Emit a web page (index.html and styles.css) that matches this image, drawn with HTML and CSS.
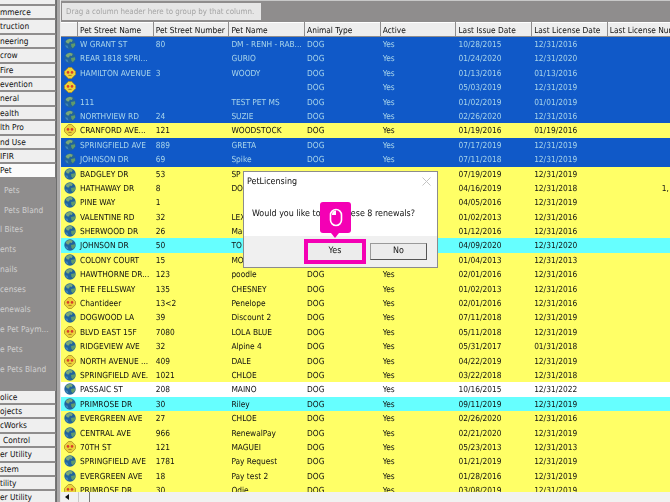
FILE: index.html
```html
<!DOCTYPE html>
<html lang="en">
<head>
    <meta charset="UTF-8">
    <meta name="viewport" content="width=device-width, initial-scale=1.0">
    <title>Pet Licensing</title>
    <link rel="stylesheet" href="styles.css">
</head>
<body>
    <svg class="defs" width="0" height="0">
        <symbol id="globe" viewBox="0 0 12 12">
            <circle cx="6" cy="6" r="5.7" fill="#20639c"/>
            <path d="M3 1.8 6 .8 8.8 1.8 7.8 4 5.8 3.6 5 5.6 3 5.2 1.6 3.6Z" fill="#79a878"/>
            <path d="M7 6 11 5.2 11.2 7.4 8.8 10.2 7.4 8.6Z" fill="#5f9a6c"/>
            <path d="M1 7.4 3.4 7.6 4.6 10.6 2.6 9.8Z" fill="#3f86bb"/>
        </symbol>
        <symbol id="smiley" viewBox="0 0 12 12">
            <path d="M4.4.5H7.6L11.5 4.4V7.6L7.6 11.5H4.4L.5 7.6V4.4Z" fill="#ecd23a" stroke="#a98c24" stroke-width=".8"/>
            <circle cx="4" cy="5.4" r="1.3" fill="#d8402c"/>
            <circle cx="8" cy="5.4" r="1.3" fill="#d8402c"/>
            <path d="M4.4 8.4H7.6" stroke="#a06a20" stroke-width=".8"/>
        </symbol>
    </svg>

    <div class="app">
        <div class="sidebar">
            <div class="nav-top">
                <div class="nav-btn"></div>
                <div class="nav-btn">mmerce</div>
                <div class="nav-btn">truction</div>
                <div class="nav-btn">neering</div>
                <div class="nav-btn">crow</div>
                <div class="nav-btn">Fire</div>
                <div class="nav-btn">evention</div>
                <div class="nav-btn">neral</div>
                <div class="nav-btn">ealth</div>
                <div class="nav-btn">lth Pro</div>
                <div class="nav-btn">nd Use</div>
                <div class="nav-btn">IFIR</div>
                <div class="nav-btn current">Pet</div>
            </div>
            <div class="nav-panel">
                <div class="nav-link inset">Pets</div>
                <div class="nav-link inset">Pets Bland</div>
                <div class="nav-link">l Bites</div>
                <div class="nav-link">ents</div>
                <div class="nav-link">nails</div>
                <div class="nav-link">censes</div>
                <div class="nav-link">enewals</div>
                <div class="nav-link">e Pet Paym...</div>
                <div class="nav-link">e Pets</div>
                <div class="nav-link">e Pets Bland</div>
            </div>
            <div class="nav-bottom">
                <div class="nav-btn">olice</div>
                <div class="nav-btn">ojects</div>
                <div class="nav-btn">cWorks</div>
                <div class="nav-btn inset">Control</div>
                <div class="nav-btn">er Utility</div>
                <div class="nav-btn">stem</div>
                <div class="nav-btn">tility</div>
                <div class="nav-btn">er Utility</div>
            </div>
        </div>
        <div class="splitter"></div>
        <div class="main">
            <div class="group-bar">
                <div class="group-hint">Drag a column header here to group by that column.</div>
            </div>
            <div class="row head">
                <span></span>
                <span>Pet Street Name</span>
                <span>Pet Street Number</span>
                <span>Pet Name</span>
                <span>Animal Type</span>
                <span>Active</span>
                <span>Last Issue Date</span>
                <span>Last License Date</span>
                <span>Last License Number</span>
            </div>
            <div class="rows">
                <div class="row blue"><svg><use href="#globe"/></svg><span>W GRANT ST</span><span>80</span><span>DM - RENH - RAB...</span><span>DOG</span><span>Yes</span><span>10/28/2015</span><span>12/31/2016</span><span></span></div>
                <div class="row blue"><svg><use href="#globe"/></svg><span>REAR 1818 SPRI...</span><span></span><span>GURIO</span><span>DOG</span><span>Yes</span><span>01/24/2020</span><span>12/31/2020</span><span></span></div>
                <div class="row blue"><svg><use href="#smiley"/></svg><span>HAMILTON AVENUE</span><span>3</span><span>WOODY</span><span>DOG</span><span>Yes</span><span>01/13/2016</span><span>01/13/2016</span><span></span></div>
                <div class="row blue"><svg><use href="#smiley"/></svg><span></span><span></span><span></span><span>DOG</span><span>Yes</span><span>05/03/2019</span><span>12/31/2019</span><span></span></div>
                <div class="row blue"><svg><use href="#globe"/></svg><span>111</span><span></span><span>TEST PET MS</span><span>DOG</span><span>Yes</span><span>01/02/2019</span><span>01/01/2019</span><span></span></div>
                <div class="row blue"><svg><use href="#globe"/></svg><span>NORTHVIEW RD</span><span>24</span><span>SUZIE</span><span>DOG</span><span>Yes</span><span>02/26/2020</span><span>12/31/2016</span><span></span></div>
                <div class="row yellow"><svg><use href="#smiley"/></svg><span>CRANFORD AVE...</span><span>121</span><span>WOODSTOCK</span><span>DOG</span><span>Yes</span><span>01/19/2016</span><span>01/19/2016</span><span></span></div>
                <div class="row blue"><svg><use href="#globe"/></svg><span>SPRINGFIELD AVE</span><span>889</span><span>GRETA</span><span>DOG</span><span>Yes</span><span>07/17/2019</span><span>12/31/2019</span><span></span></div>
                <div class="row blue"><svg><use href="#globe"/></svg><span>JOHNSON DR</span><span>69</span><span>Spike</span><span>DOG</span><span>Yes</span><span>07/11/2018</span><span>12/31/2019</span><span></span></div>
                <div class="row yellow"><svg><use href="#globe"/></svg><span>BADGLEY DR</span><span>53</span><span>SP</span><span></span><span></span><span>07/19/2019</span><span>12/31/2019</span><span></span></div>
                <div class="row yellow"><svg><use href="#globe"/></svg><span>HATHAWAY DR</span><span>8</span><span>DO</span><span></span><span></span><span>04/16/2019</span><span>12/31/2018</span><span class="num">1,</span></div>
                <div class="row yellow"><svg><use href="#globe"/></svg><span>PINE WAY</span><span>1</span><span></span><span></span><span></span><span>04/05/2016</span><span>12/31/2019</span><span></span></div>
                <div class="row yellow"><svg><use href="#globe"/></svg><span>VALENTINE RD</span><span>32</span><span>LEX</span><span></span><span></span><span>01/02/2013</span><span>12/31/2016</span><span></span></div>
                <div class="row yellow"><svg><use href="#globe"/></svg><span>SHERWOOD DR</span><span>26</span><span>Mac</span><span></span><span></span><span>01/12/2016</span><span>12/31/2016</span><span></span></div>
                <div class="row cyan"><svg><use href="#globe"/></svg><span>JOHNSON DR</span><span>50</span><span>TO</span><span></span><span></span><span>04/09/2020</span><span>12/31/2020</span><span></span></div>
                <div class="row yellow"><svg><use href="#globe"/></svg><span>COLONY COURT</span><span>15</span><span>MO</span><span></span><span></span><span>01/04/2013</span><span>12/31/2013</span><span></span></div>
                <div class="row yellow"><svg><use href="#globe"/></svg><span>HAWTHORNE DR...</span><span>123</span><span>poodle</span><span>DOG</span><span>Yes</span><span>02/01/2016</span><span>12/31/2016</span><span></span></div>
                <div class="row yellow"><svg><use href="#globe"/></svg><span>THE FELLSWAY</span><span>135</span><span>CHESNEY</span><span>DOG</span><span>Yes</span><span>01/02/2013</span><span>12/31/2016</span><span></span></div>
                <div class="row yellow"><svg><use href="#smiley"/></svg><span>Chantideer</span><span>13&lt;2</span><span>Penelope</span><span>DOG</span><span>Yes</span><span>02/01/2016</span><span>12/31/2016</span><span></span></div>
                <div class="row yellow"><svg><use href="#globe"/></svg><span>DOGWOOD LA</span><span>39</span><span>Discount 2</span><span>DOG</span><span>Yes</span><span>07/11/2018</span><span>12/31/2019</span><span></span></div>
                <div class="row yellow"><svg><use href="#smiley"/></svg><span>BLVD EAST 15F</span><span>7080</span><span>LOLA BLUE</span><span>DOG</span><span>Yes</span><span>05/11/2018</span><span>12/31/2019</span><span></span></div>
                <div class="row yellow"><svg><use href="#globe"/></svg><span>RIDGEVIEW AVE</span><span>32</span><span>Alpine 4</span><span>DOG</span><span>Yes</span><span>05/31/2017</span><span>01/31/2018</span><span></span></div>
                <div class="row yellow"><svg><use href="#smiley"/></svg><span>NORTH AVENUE ...</span><span>409</span><span>DALE</span><span>DOG</span><span>Yes</span><span>04/22/2019</span><span>12/31/2019</span><span></span></div>
                <div class="row yellow"><svg><use href="#globe"/></svg><span>SPRINGFIELD AVE.</span><span>1021</span><span>CHLOE</span><span>DOG</span><span>Yes</span><span>03/22/2018</span><span>12/31/2018</span><span></span></div>
                <div class="row white"><svg><use href="#globe"/></svg><span>PASSAIC ST</span><span>208</span><span>MAINO</span><span>DOG</span><span>Yes</span><span>10/16/2015</span><span>12/31/2022</span><span></span></div>
                <div class="row cyan"><svg><use href="#globe"/></svg><span>PRIMROSE DR</span><span>30</span><span>Riley</span><span>DOG</span><span>Yes</span><span>09/11/2019</span><span>12/31/2019</span><span></span></div>
                <div class="row yellow"><svg><use href="#globe"/></svg><span>EVERGREEN AVE</span><span>27</span><span>CHLOE</span><span>DOG</span><span>Yes</span><span>02/26/2020</span><span>12/31/2016</span><span></span></div>
                <div class="row yellow"><svg><use href="#globe"/></svg><span>CENTRAL AVE</span><span>966</span><span>RenewalPay</span><span>DOG</span><span>Yes</span><span>02/21/2020</span><span>12/31/2019</span><span></span></div>
                <div class="row yellow"><svg><use href="#smiley"/></svg><span>70TH ST</span><span>121</span><span>MAGUEI</span><span>DOG</span><span>Yes</span><span>05/23/2013</span><span>12/31/2013</span><span></span></div>
                <div class="row yellow"><svg><use href="#globe"/></svg><span>SPRINGFIELD AVE</span><span>1781</span><span>Pay Request</span><span>DOG</span><span>Yes</span><span>01/21/2019</span><span>12/31/2019</span><span></span></div>
                <div class="row yellow"><svg><use href="#globe"/></svg><span>EVERGREEN AVE</span><span>18</span><span>Pay test 2</span><span>DOG</span><span>Yes</span><span>01/28/2016</span><span>12/31/2019</span><span></span></div>
                <div class="row yellow"><svg><use href="#smiley"/></svg><span>PRIMROSE DR</span><span>30</span><span>Odie</span><span>DOG</span><span>Yes</span><span>03/08/2019</span><span>12/31/2019</span><span></span></div>
            </div>
            <div class="hscroll">
                <div class="hscroll-arrow"></div>
                <div class="hscroll-thumb"></div>
            </div>
        </div>
    </div>

    <div class="dialog">
        <div class="dialog-title">
            <span>PetLicensing</span>
            <svg class="dialog-close" width="9" height="9" viewBox="0 0 9 9"><path d="M.5.5 8.5 8.5M8.5.5.5 8.5" stroke="#c4c4c4" stroke-width="1"/></svg>
        </div>
        <div class="dialog-msg"><span>Would you like to</span><span>these 8 renewals?</span></div>
        <div class="dialog-foot">
            <div class="dialog-btn yes">Yes</div>
            <div class="dialog-btn no">No</div>
        </div>
    </div>

    <div class="callout">
        <svg width="14" height="19" viewBox="0 0 14 19">
            <rect x="1.5" y="1.5" width="11" height="16" rx="5.5" fill="none" stroke="#fff" stroke-width="1.6"/>
            <path d="M3 7V6.5A4 4 0 0 1 7 2.5V7Z" fill="#fff"/>
        </svg>
    </div>
</body>
</html>
```

FILE: styles.css
```css
html, body {
    margin: 0;
    height: 502px;
    overflow: hidden;
}
body {
    font-family: "DejaVu Sans", sans-serif;
    font-stretch: condensed;
    font-size: 8.3px;
    text-rendering: geometricPrecision;
    color: #111;
    background: #8f8d8d;
}
.defs {
    position: absolute;
}
.app {
    display: flex;
    height: 502px;
    filter: blur(0.3px);
}

/* left navigation, cut off by the edge of the picture */
.sidebar {
    width: 56px;
    flex: none;
    display: flex;
    flex-direction: column;
    overflow: hidden;
    background: #8f8d8d;
}
.nav-top {
    margin-top: -8.4px;
}
.nav-btn {
    height: 14.4px;
    line-height: 13px;
    box-sizing: border-box;
    background: #efefef;
    border-bottom: 2px solid #8f8d8d;
    border-right: 1px solid #777;
    white-space: nowrap;
}
.nav-btn.current {
    background: #fbfbfb;
}
.nav-panel {
    flex: none;
    height: 212px;
    box-sizing: border-box;
    padding-top: 2px;
    color: #cfcfcf;
}
.nav-link {
    height: 19.9px;
    line-height: 19.9px;
    white-space: nowrap;
}
.nav-link.inset {
    padding-left: 4px;
}
.nav-btn.inset {
    padding-left: 3px;
}
.nav-bottom {
    flex: none;
}
.splitter {
    width: 5px;
    flex: none;
    box-sizing: border-box;
    background: #a9a8a8;
    border-right: 1px solid #e8e8e8;
    border-left: 1px solid #6e6e6e;
}

/* grid */
.main {
    flex: 1;
    min-width: 0;
    display: flex;
    flex-direction: column;
    overflow: hidden;
}
.group-bar {
    height: 22px;
    flex: none;
    box-sizing: border-box;
    padding: 2px 0 2px 1px;
    background: #8f8d8d;
    border-top: 1px solid #c8c8c8;
}
.group-hint {
    width: 199px;
    height: 17px;
    line-height: 17px;
    padding-left: 4px;
    box-sizing: border-box;
    background: #e6e6e6;
    color: #a4a4a4;
    font-size: 7.9px;
    white-space: nowrap;
    overflow: hidden;
}
.row {
    display: grid;
    grid-template-columns: 17px repeat(8, 75.7px);
    height: 14.4px;
    line-height: 14.6px;
    white-space: nowrap;
}
.row span {
    padding-left: 2px;
    overflow: hidden;
}
.row svg {
    width: 12px;
    height: 12px;
    margin: 1px 0 0 3px;
}
.head {
    height: 15px;
    flex: none;
    line-height: 15px;
    background: #8f8d8d;
}
.head span {
    margin-right: 1px;
    margin-bottom: 1px;
    background: #eeeeee;
    border-top: 1px solid #fff;
    box-sizing: border-box;
    line-height: 14px;
}
.rows {
    flex: 1;
    min-height: 0;
    overflow: hidden;
    background: #ffff66;
}
.blue {
    background: #1059c8;
    color: #a8d4ea;
}
.yellow {
    background: #ffff66;
}
.cyan {
    background: #66ffff;
}
.white {
    background: #fff;
}
.row .num {
    padding-left: 54px;
}
.hscroll {
    height: 10px;
    flex: none;
    display: flex;
    background: #f1f1f1;
}
.hscroll-arrow {
    width: 0;
    height: 0;
    margin: 2px 3px 0 4px;
    border: 3px solid transparent;
    border-left-width: 0;
    border-right: 4px solid #111;
}
.hscroll-thumb {
    width: 10px;
    margin-left: 6px;
    border-left: 1px solid #c8c8c8;
    border-right: 1px solid #777;
}

/* message box and the tutorial marker over it */
.dialog {
    position: absolute;
    left: 243px;
    top: 171px;
    width: 195px;
    height: 97px;
    box-sizing: border-box;
    display: flex;
    flex-direction: column;
    background: #fff;
    border: 1px solid #8c8c8c;
    font-size: 8.9px;
    filter: blur(0.3px);
}
.dialog-title {
    display: flex;
    justify-content: space-between;
    align-items: center;
    height: 19px;
    padding: 0 6px 0 3px;
}
.dialog-close {
    flex: none;
}
.dialog-msg {
    flex: 1;
    display: flex;
    justify-content: space-between;
    padding: 18px 22px 0 8px;
    white-space: nowrap;
}
.dialog-foot {
    height: 31px;
    display: flex;
    gap: 8px;
    padding: 7px 0 0 64px;
    box-sizing: border-box;
    background: #f0f0f0;
}
.dialog-btn {
    height: 17px;
    line-height: 15px;
    box-sizing: border-box;
    text-align: center;
    background: #ececec;
    border: 1px solid #9a9a9a;
}
.dialog-btn.yes {
    width: 54px;
    outline: 4px solid #f400b4;
    border-color: #ececec;
}
.dialog-btn.no {
    width: 57px;
    border-right-color: #555;
    border-bottom-color: #555;
}
.callout {
    position: absolute;
    left: 320px;
    top: 202px;
    width: 31px;
    height: 31px;
    display: flex;
    align-items: center;
    justify-content: center;
    border-radius: 3px;
    background: #f400b4;
}
.callout::after {
    content: "";
    position: absolute;
    left: 11px;
    top: 31px;
    border: 4px solid transparent;
    border-top: 5px solid #f400b4;
    border-bottom: 0;
}
```
